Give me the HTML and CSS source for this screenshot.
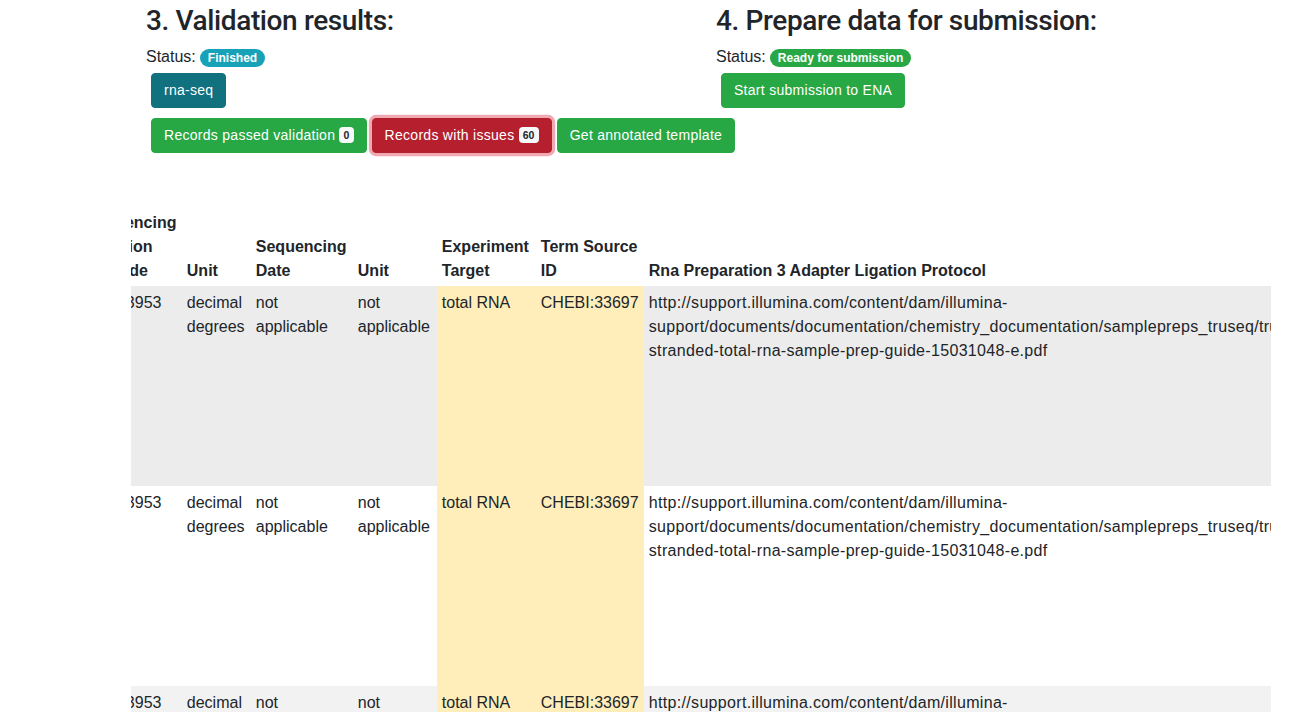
FILE: index.html
```html
<!DOCTYPE html>
<html lang="en">
<head>
<meta charset="utf-8">
<title>Validation results</title>
<link rel="stylesheet" href="styles.css">
</head>
<body>
<div class="page">
  <div class="top">
    <section class="col">
      <h3 class="title">3. Validation results:</h3>
      <div class="status">Status: <span class="badge badge-info">Finished</span></div>
      <div class="btn-line first">
        <button class="btn btn-teal">rna-seq</button>
      </div>
      <div class="btn-line second">
        <button class="btn btn-green">Records passed validation <span class="badge badge-light">0</span></button>
        <button class="btn btn-red focus">Records with issues <span class="badge badge-light">60</span></button>
        <button class="btn btn-green">Get annotated template</button>
      </div>
    </section>
    <section class="col">
      <h3 class="title">4. Prepare data for submission:</h3>
      <div class="status">Status: <span class="badge badge-success">Ready for submission</span></div>
      <div class="btn-line first">
        <button class="btn btn-green">Start submission to ENA</button>
      </div>
    </section>
  </div>

  <div class="table-wrap" id="tw">
    <table class="data">
      <colgroup>
        <col class="c-lat">
        <col class="c-unit1">
        <col class="c-date">
        <col class="c-unit2">
        <col class="c-target">
        <col class="c-term">
        <col class="c-proto">
      </colgroup>
      <thead>
        <tr>
          <th>Sequencing Location Latitude</th>
          <th>Unit</th>
          <th>Sequencing Date</th>
          <th>Unit</th>
          <th>Experiment Target</th>
          <th>Term Source ID</th>
          <th>Rna Preparation 3 Adapter Ligation Protocol</th>
        </tr>
      </thead>
      <tbody>
        <tr class="row-hover">
          <td>51.523953</td>
          <td>decimal degrees</td>
          <td>not applicable</td>
          <td>not applicable</td>
          <td class="warn">total RNA</td>
          <td class="warn">CHEBI:33697</td>
          <td class="url">http://support.illumina.com/content/dam/illumina-support/documents/documentation/chemistry_documentation/samplepreps_truseq/truseqstrandedtotalrna/truseq-<br>stranded-total-rna-sample-prep-guide-15031048-e.pdf</td>
        </tr>
        <tr>
          <td>51.523953</td>
          <td>decimal degrees</td>
          <td>not applicable</td>
          <td>not applicable</td>
          <td class="warn">total RNA</td>
          <td class="warn">CHEBI:33697</td>
          <td class="url">http://support.illumina.com/content/dam/illumina-support/documents/documentation/chemistry_documentation/samplepreps_truseq/truseqstrandedtotalrna/truseq-<br>stranded-total-rna-sample-prep-guide-15031048-e.pdf</td>
        </tr>
        <tr class="row-striped">
          <td>51.523953</td>
          <td>decimal degrees</td>
          <td>not applicable</td>
          <td>not applicable</td>
          <td class="warn">total RNA</td>
          <td class="warn">CHEBI:33697</td>
          <td class="url">http://support.illumina.com/content/dam/illumina-support/documents/documentation/chemistry_documentation/samplepreps_truseq/truseqstrandedtotalrna/truseq-<br>stranded-total-rna-sample-prep-guide-15031048-e.pdf</td>
        </tr>
      </tbody>
    </table>
  </div>
</div>
<script src="script.js"></script>
</body>
</html>
```

FILE: styles.css
```css
html, body {
  overflow: hidden;
}

body {
  margin: 0;
  background: #fff;
  color: #212529;
  font-family: "Liberation Sans", Arial, sans-serif;
  font-size: 16px;
  line-height: 1.5;
}

.page {
  width: 1140px;
  margin-left: 131px;
}

.top {
  display: grid;
  grid-template-columns: 570px 570px;
}

.col {
  padding: 0 15px;
  min-width: 0;
}

.title {
  font-family: Roboto, "Liberation Sans", sans-serif;
  font-weight: 500;
  font-size: 28px;
  line-height: 1.2;
  letter-spacing: -0.38px;
  margin: 4px 0 7px;
  color: #212529;
}

.status {
  line-height: 24px;
}

.badge {
  display: inline-block;
  font-size: 12px;
  font-weight: 700;
  line-height: 1;
  padding: 3px 7.6px;
  border-radius: 10rem;
  color: #fff;
  vertical-align: baseline;
  white-space: nowrap;
}

.badge-info {
  background: #17a2b8;
}

.badge-success {
  background: #28a745;
}

.badge-light {
  background: #f8f9fa;
  color: #212529;
  font-size: 10.5px;
  padding: 2.6px 4.2px;
  border-radius: 4px;
  position: relative;
  top: -1px;
  letter-spacing: 0;
}

.btn-line {
  display: flex;
  align-items: flex-start;
  gap: 5px;
  padding-left: 5px;
  white-space: nowrap;
}

.btn-line.first {
  margin-top: 4px;
}

.btn-line.second {
  margin-top: 10px;
}

.btn {
  font-family: inherit;
  font-size: 14px;
  line-height: 21px;
  letter-spacing: 0.28px;
  padding: 6px 12px;
  border: 1px solid transparent;
  border-radius: 4px;
  color: #fff;
  cursor: pointer;
  flex: none;
}

.btn-green {
  background: #28a745;
  border-color: #28a745;
}

.btn-teal {
  background: #11717f;
  border-color: #10707f;
}

.btn-red {
  background: #b51f2e;
  border-color: #b21f2d;
}

.btn-red.focus {
  box-shadow: 0 0 0 3.2px rgba(225, 83, 97, 0.5);
}

.table-wrap {
  margin-top: 52px;
  overflow: hidden;
  width: 1140px;
}

.data {
  border-collapse: collapse;
  table-layout: fixed;
  width: 1563px;
  color: #212529;
}

.c-lat { width: 101px; }
.c-unit1 { width: 69px; }
.c-date { width: 102px; }
.c-unit2 { width: 84px; }
.c-target { width: 99px; }
.c-term { width: 108px; }
.c-proto { width: 1000px; }

.data th,
.data td {
  padding: 4.8px;
  text-align: left;
}

.data th {
  font-weight: 700;
  vertical-align: bottom;
  padding-top: 6.8px;
  padding-bottom: 2.8px;
}

.data td {
  vertical-align: top;
}

.data td.url {
  letter-spacing: 0.32px;
}

.data tbody tr {
  height: 200px;
}

.data tr.row-hover td {
  background: #ececec;
}

.data tr.row-striped td {
  background: #f2f2f2;
}

.data tr td.warn {
  background: #ffeeba;
}
```

FILE: script.js
```js
document.getElementById('tw').scrollLeft = 50;
```
